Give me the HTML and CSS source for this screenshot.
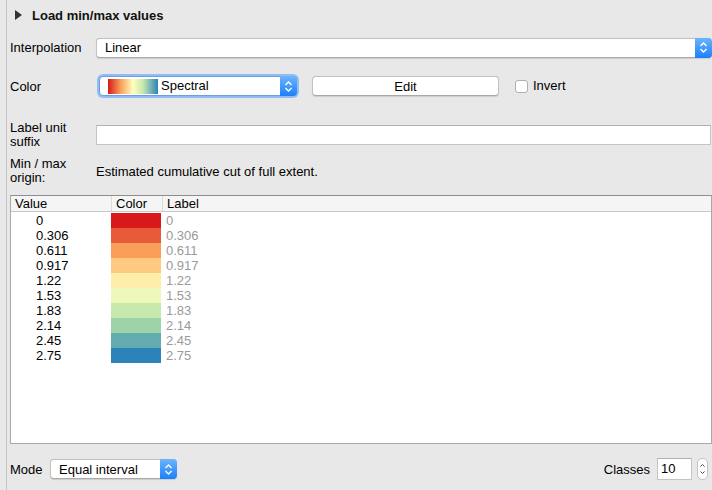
FILE: index.html
```html
<!DOCTYPE html>
<html>
<head>
<meta charset="utf-8">
<link rel="stylesheet" href="styles.css">
</head>
<body>
<div class="panel">
  <div class="group-head">
    <span class="tri"></span>
    <span class="group-title">Load min/max values</span>
  </div>

  <div class="row row-interp">
    <div class="lbl">Interpolation</div>
    <div class="combo combo-wide">
      <span class="combo-text">Linear</span>
      <span class="arrow"><svg width="9" height="13" viewBox="0 0 9 13"><path d="M1.5 5 L4.5 2 L7.5 5 M1.5 8 L4.5 11 L7.5 8" fill="none" stroke="#fff" stroke-width="1.4"/></svg></span>
    </div>
  </div>

  <div class="row row-color">
    <div class="lbl">Color</div>
    <div class="combo combo-color">
      <span class="ramp"></span>
      <span class="combo-text ramp-text">Spectral</span>
      <span class="arrow"><svg width="9" height="13" viewBox="0 0 9 13"><path d="M1.5 5 L4.5 2 L7.5 5 M1.5 8 L4.5 11 L7.5 8" fill="none" stroke="#fff" stroke-width="1.4"/></svg></span>
    </div>
    <div class="btn">Edit</div>
    <div class="check"></div>
    <div class="check-lbl">Invert</div>
  </div>

  <div class="row row-suffix">
    <div class="lbl lbl2">Label unit<br>suffix</div>
    <div class="input"></div>
  </div>

  <div class="row row-origin">
    <div class="lbl lbl2">Min / max<br>origin:</div>
    <div class="origin-text">Estimated cumulative cut of full extent.</div>
  </div>

  <div class="table">
    <div class="thead">
      <div class="th th-val">Value</div>
      <div class="th th-col">Color</div>
      <div class="th th-lab">Label</div>
    </div>
    <div class="tbody">
      <div class="tr"><div class="td-val">0</div><div class="td-col c1"></div><div class="td-lab">0</div></div>
      <div class="tr"><div class="td-val">0.306</div><div class="td-col c2"></div><div class="td-lab">0.306</div></div>
      <div class="tr"><div class="td-val">0.611</div><div class="td-col c3"></div><div class="td-lab">0.611</div></div>
      <div class="tr"><div class="td-val">0.917</div><div class="td-col c4"></div><div class="td-lab">0.917</div></div>
      <div class="tr"><div class="td-val">1.22</div><div class="td-col c5"></div><div class="td-lab">1.22</div></div>
      <div class="tr"><div class="td-val">1.53</div><div class="td-col c6"></div><div class="td-lab">1.53</div></div>
      <div class="tr"><div class="td-val">1.83</div><div class="td-col c7"></div><div class="td-lab">1.83</div></div>
      <div class="tr"><div class="td-val">2.14</div><div class="td-col c8"></div><div class="td-lab">2.14</div></div>
      <div class="tr"><div class="td-val">2.45</div><div class="td-col c9"></div><div class="td-lab">2.45</div></div>
      <div class="tr"><div class="td-val">2.75</div><div class="td-col c10"></div><div class="td-lab">2.75</div></div>
    </div>
  </div>

  <div class="row row-bottom">
    <div class="mode-lbl">Mode</div>
    <div class="combo combo-mode">
      <span class="combo-text">Equal interval</span>
      <span class="arrow"><svg width="9" height="13" viewBox="0 0 9 13"><path d="M1.5 5 L4.5 2 L7.5 5 M1.5 8 L4.5 11 L7.5 8" fill="none" stroke="#fff" stroke-width="1.4"/></svg></span>
    </div>
    <div class="spacer"></div>
    <div class="classes-lbl">Classes</div>
    <div class="spin-input">10</div>
    <div class="stepper"><svg width="11" height="22" viewBox="0 0 11 22"><path d="M3 8 L5.5 5.5 L8 8 M3 14 L5.5 16.5 L8 14" fill="none" stroke="#333" stroke-width="1.1"/></svg></div>
  </div>
</div>
</body>
</html>
```

FILE: styles.css
```css
html, body {
  margin: 0;
  padding: 0;
  background: #e8e8e8;
}
body {
  width: 712px;
  height: 490px;
  overflow: hidden;
  font-family: "Liberation Sans", Arial, sans-serif;
  font-size: 13px;
  color: #000;
}
.panel {
  margin-left: 6px;
  border-left: 1px solid #c6c6c6;
  padding-left: 3px;
  height: 490px;
  box-sizing: border-box;
  display: flex;
  flex-direction: column;
}
.group-head {
  height: 30px;
  display: flex;
  align-items: center;
}
.tri {
  width: 0;
  height: 0;
  border-top: 5px solid transparent;
  border-bottom: 5px solid transparent;
  border-left: 7px solid #333;
  margin-left: 5px;
  margin-right: 10px;
}
.group-title {
  font-weight: bold;
  color: #111;
  margin-top: 1px;
}
.row {
  display: flex;
  align-items: center;
}
.lbl {
  width: 86px;
  flex: none;
}
.lbl2 {
  line-height: 14px;
}
.row-interp {
  margin-top: 7px;
  height: 21px;
}
.combo {
  position: relative;
  height: 20px;
  box-sizing: border-box;
  background: #fff;
  border: 1px solid #c2c2c2;
  border-bottom-color: #a9a9a9;
  border-radius: 4px;
  display: flex;
  align-items: center;
  box-shadow: 0 0.5px 1px rgba(0,0,0,0.12);
}
.combo-wide {
  width: 616px;
}
.combo-text {
  padding-left: 8px;
  flex: 1;
}
.arrow {
  width: 17px;
  align-self: stretch;
  margin: -1px -1px -1px 0;
  border-radius: 0 4px 4px 0;
  background: linear-gradient(#6eb4fb, #1b80fb);
  display: flex;
  align-items: center;
  justify-content: center;
}
.row-color {
  margin-top: 17px;
  height: 22px;
}
.combo-color {
  margin-left: 3px;
  width: 198px;
  border-color: #6a9fe6;
  box-shadow: 0 0 0 2px #93bdf2;
}
.ramp {
  width: 50px;
  height: 15px;
  margin-left: 8px;
  margin-right: 3px;
  background: linear-gradient(to right, #d7191c, #f99e59 25%, #ffffbf 50%, #c7e8ad 70%, #2b83ba);
}
.ramp-text {
  padding-left: 0;
  margin-top: -2px;
}
.btn {
  margin-left: 15px;
  width: 187px;
  height: 20px;
  box-sizing: border-box;
  background: #fff;
  border: 1px solid #c2c2c2;
  border-bottom-color: #a9a9a9;
  border-radius: 4px;
  display: flex;
  align-items: center;
  justify-content: center;
  box-shadow: 0 0.5px 1px rgba(0,0,0,0.12);
}
.check {
  margin-left: 16px;
  width: 13px;
  height: 13px;
  box-sizing: border-box;
  background: #fff;
  border: 1px solid #b0b0b0;
  border-radius: 3px;
}
.check-lbl {
  margin-left: 5px;
  margin-top: -2px;
}
.row-suffix {
  margin-top: 24px;
  height: 28px;
}
.input {
  width: 615px;
  height: 20px;
  box-sizing: border-box;
  background: #fff;
  border: 1px solid #c4c4c4;
  border-top-color: #b0b0b0;
}
.row-origin {
  margin-top: 8px;
  height: 28px;
}
.origin-text {
  margin-top: 1px;
}
.table {
  margin-top: 10px;
  width: 702px;
  height: 249px;
  box-sizing: border-box;
  background: #fff;
  border: 1px solid #a9a9a9;
  border-top-color: #8e8e8e;
}
.thead {
  height: 16px;
  box-sizing: border-box;
  background: #f5f5f5;
  border-bottom: 1px solid #c8c8c8;
  display: flex;
  align-items: center;
  line-height: 15px;
}
.th {
  padding-left: 4px;
  box-sizing: border-box;
}
.th-val {
  width: 100px;
}
.th-col {
  width: 51px;
  border-left: 1px solid #dcdcdc;
}
.th-lab {
  border-left: 1px solid #dcdcdc;
}
.tbody {
  padding-top: 1px;
}
.tr {
  display: flex;
  height: 15px;
  line-height: 16px;
}
.td-val {
  width: 100px;
  padding-left: 25px;
  box-sizing: border-box;
}
.td-col {
  width: 50px;
}
.td-lab {
  padding-left: 5px;
  color: #9a9a9a;
}
.c1 { background: #d7191c; }
.c2 { background: #e85b3a; }
.c3 { background: #f99e59; }
.c4 { background: #fec980; }
.c5 { background: #ffedaa; }
.c6 { background: #edf8b9; }
.c7 { background: #c7e9ad; }
.c8 { background: #9dd3a7; }
.c9 { background: #64abb0; }
.c10 { background: #2b83ba; }
.row-bottom {
  margin-top: 13px;
  height: 24px;
  padding-right: 4px;
}
.mode-lbl {
  width: 40px;
}
.combo-mode {
  width: 127px;
}
.spacer {
  flex: 1;
}
.classes-lbl {
  margin-right: 7px;
}
.spin-input {
  width: 35px;
  height: 22px;
  box-sizing: border-box;
  background: #fff;
  border: 1px solid #c4c4c4;
  border-top-color: #b0b0b0;
  padding-left: 3px;
  line-height: 20px;
}
.stepper {
  margin-left: 5px;
  width: 11px;
  height: 22px;
  box-sizing: border-box;
  background: #fff;
  border: 1px solid #c2c2c2;
  border-radius: 5px;
  display: flex;
  align-items: center;
  justify-content: center;
  overflow: hidden;
}
```
